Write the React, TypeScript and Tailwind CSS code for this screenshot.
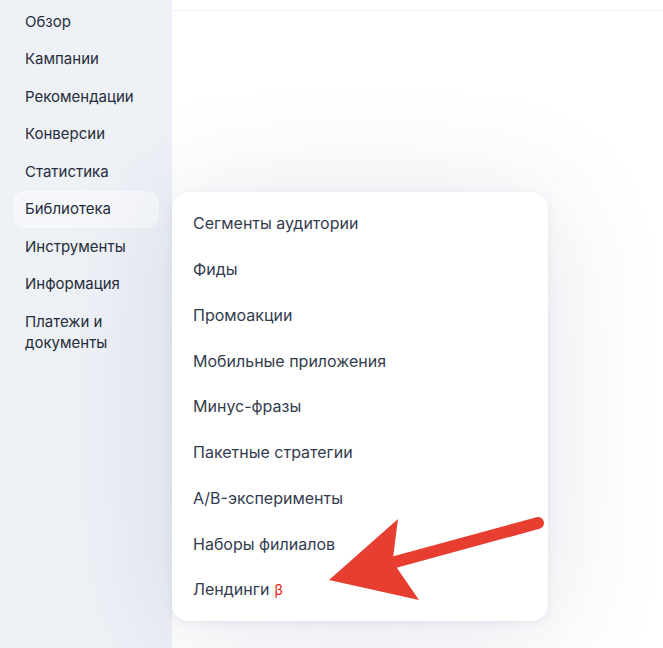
import React from "react";

const navItems = [
  "Обзор",
  "Кампании",
  "Рекомендации",
  "Конверсии",
  "Статистика",
  "Библиотека",
  "Инструменты",
  "Информация",
];

const libraryItems = [
  "Сегменты аудитории",
  "Фиды",
  "Промоакции",
  "Мобильные приложения",
  "Минус-фразы",
  "Пакетные стратегии",
  "A/B-эксперименты",
  "Наборы филиалов",
];

function Sidebar() {
  return (
    <aside className="w-[172px] shrink-0 bg-[#eef1f6] pt-[3px]">
      <nav className="flex flex-col">
        {navItems.map((item) => {
          const active = item === "Библиотека";
          return (
            <div
              key={item}
              className={
                active
                  ? "mx-[13px] flex h-[37.5px] items-center rounded-xl bg-[#f6f8fb] px-3 text-[15px] text-[#262d3b]"
                  : "mx-[13px] flex h-[37.5px] items-center px-3 text-[15px] text-[#262d3b]"
              }
            >
              {item}
            </div>
          );
        })}
        <div className="mx-[13px] px-3 pt-[8px] text-[15px] leading-[21px] text-[#262d3b]">
          Платежи и
          <br />
          документы
        </div>
      </nav>
    </aside>
  );
}

function LibraryMenu() {
  return (
    <div className="absolute left-0 top-[181px] w-[376px] rounded-2xl bg-white py-[8.5px] shadow-[0_10px_120px_rgba(30,45,100,0.13),0_2px_8px_rgba(30,45,100,0.07)]">
      {libraryItems.map((item) => (
        <div key={item} className="flex h-[45.75px] items-center px-[21px] text-[16px] text-[#333c4e]">
          {item}
        </div>
      ))}
      <div className="flex h-[45.75px] items-center px-[21px] text-[16px] text-[#333c4e]">
        Лендинги
        <span className="ml-[5px] text-[14px] text-[#e8200c]">β</span>
      </div>
    </div>
  );
}

// red annotation arrow drawn over the screenshot
function Arrow() {
  return (
    <svg
      className="pointer-events-none absolute left-0 top-0"
      width="663"
      height="648"
      viewBox="0 0 663 648"
    >
      <path
        d="M395 562 L538 523"
        stroke="#e63e31"
        strokeWidth="12"
        strokeLinecap="round"
        fill="none"
      />
      <path d="M329 580 L398 519 L393 558 L397 568 L419 600 Z" fill="#e63e31" />
    </svg>
  );
}

export default function App() {
  return (
    <div
      className="relative flex h-[648px] w-[663px] overflow-hidden bg-white"
      style={{ fontFamily: "Inter, 'Noto Sans', sans-serif" }}
    >
      <Sidebar />
      <main className="flex flex-1 flex-col">
        <div className="h-[11px] shrink-0 border-b border-[#eceef5] bg-white" />
        <div className="relative flex-1">
          <LibraryMenu />
        </div>
      </main>
      <Arrow />
    </div>
  );
}
